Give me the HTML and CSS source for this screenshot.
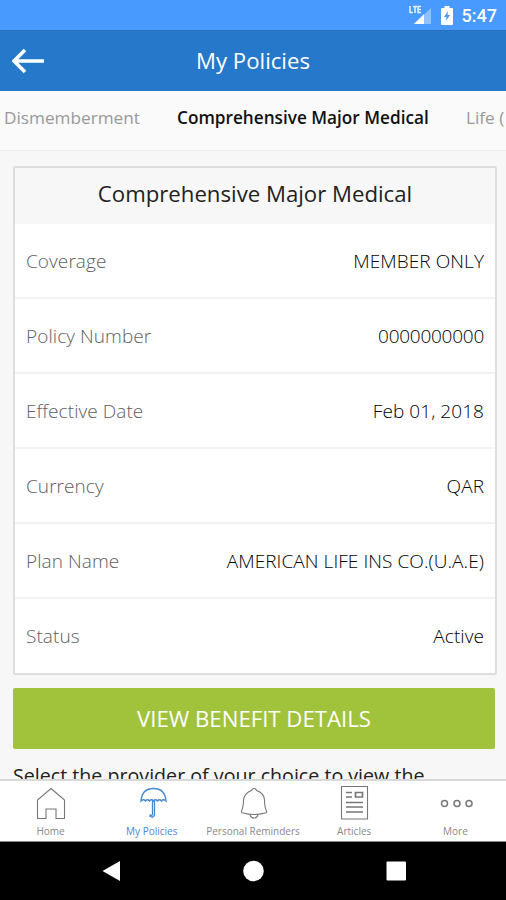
FILE: index.html
```html
<!DOCTYPE html>
<html lang="en">
<head>
<meta charset="utf-8">
<title>My Policies</title>
<link rel="stylesheet" href="styles.css">
</head>
<body>
<div class="status">
  <svg class="signal" width="24" height="20" viewBox="0 0 24 20"><path class="faint" d="M5 19L22 3V19Z"/><path class="white" d="M5 19L15 9V19Z"/><path class="lte" d="M1 1V7.500H4M4 1.500H8M6 1.500V8M12 1.500H9V7.500H12M9 4.500H12"/></svg>
  <svg class="battery" width="12" height="19" viewBox="0 0 12 19"><path class="white" d="M3.500 0H8.500V2H11Q12 2 12 3V18Q12 19 11 19H1Q0 19 0 18V3Q0 2 1 2H3.500Z"/><path class="bolt" d="M7 5L3 11H5.500L5 15L9 9H6.500Z"/></svg>
  <span class="clock">5:47</span>
</div>
<header class="bar">
  <svg class="back" width="33" height="26" viewBox="0 0 33 26"><path d="M13 2L2 13L13 24M2 13H32"/></svg>
  <h1>My Policies</h1>
</header>
<nav class="tabs"><span class="prev">Dismemberment</span><span class="current">Comprehensive Major Medical</span><span class="next">Life (</span></nav>
<main>
  <section class="card">
    <h2>Comprehensive Major Medical</h2>
    <dl>
      <div class="row"><dt>Coverage</dt><dd>MEMBER ONLY</dd></div>
      <div class="row"><dt>Policy Number</dt><dd class="digits">0000000000</dd></div>
      <div class="row"><dt>Effective Date</dt><dd>Feb 01, 2018</dd></div>
      <div class="row"><dt>Currency</dt><dd>QAR</dd></div>
      <div class="row"><dt>Plan Name</dt><dd>AMERICAN LIFE INS CO.(U.A.E)</dd></div>
      <div class="row"><dt>Status</dt><dd>Active</dd></div>
    </dl>
  </section>
  <button class="cta" type="button">VIEW BENEFIT DETAILS</button>
  <p class="hint">Select the provider of your choice to view the</p>
</main>
<nav class="bottom">
  <a><svg width="36" height="36" viewBox="0 0 36 36"><path d="M18 3.500L31.500 15V33.500H23V24H13V33.500H4.500V15Z"/></svg><span>Home</span></a>
  <a class="active"><svg width="36" height="36" viewBox="0 0 36 36"><path d="M7 16Q8 3.500 19.500 3.500T32 16Q29.500 13.500 27.500 16Q25.500 13.500 23.500 16Q21.500 13.500 19.500 16Q17.500 13.500 15.500 16Q13.500 13.500 11.500 16Q9.500 13.500 7 16ZM18.500 16V29.500Q17.500 31.500 15.500 29.500M20.500 16V30Q19 33.500 15.500 31"/></svg><span>My Policies</span></a>
  <a><svg width="36" height="36" viewBox="0 0 36 36"><path d="M16.500 5.500Q17 3.500 19 3.500T21.500 5.500Q29 8 29.500 15Q29.500 22 31.500 26Q32 28 30 28Q19 31 8 28Q6 28 6.500 26Q8.500 22 8.500 15Q9.500 8 16.500 5.500ZM15 30Q16 33 19 33T23 30"/></svg><span>Personal Reminders</span></a>
  <a><svg width="36" height="36" viewBox="0 0 36 36"><path d="M5.500 1.500H31.500V34H5.500Z"/><path class="thick" d="M10 7.500H16M10 12H16M19.500 7.500H26.500V12H19.500ZM10 17.500H27M10 22H27M10 27H27"/></svg><span>Articles</span></a>
  <a><svg class="dots" width="36" height="36" viewBox="0 0 36 36"><circle cx="7.500" cy="18.500" r="3"/><circle cx="20" cy="18.500" r="3"/><circle cx="32" cy="18.500" r="3"/></svg><span>More</span></a>
</nav>
<footer class="system">
  <svg width="506" height="58" viewBox="0 0 506 58"><path class="white" d="M102.500 29L120 19V39Z"/><circle class="white" cx="253.500" cy="29" r="10.300"/><rect class="white" x="386.500" y="19.500" width="19.500" height="19" rx="1"/></svg>
</footer>
</body>
</html>
```
FILE: styles.css
```css
* { box-sizing: border-box; margin: 0; padding: 0; }
body { width: 506px; height: 900px; overflow: hidden; display: flex; flex-direction: column; background: #f7f7f7; font-family: "Open Sans", "Noto Sans", sans-serif; color: #222; }
svg { display: block; fill: none; flex: none; }
.white { fill: #fff; stroke: none; }
.status { height: 30px; flex: none; background: #499afe; display: flex; align-items: center; justify-content: flex-end; padding-right: 9px; color: #fff; }
.signal { margin-right: 8px; }
.faint { fill: #8fc1ff; }
.lte { stroke: #e8f2ff; stroke-width: 1.500; }
.battery { margin-right: 9px; }
.bolt { fill: #499afe; }
.clock { font: 500 18px/32px Roboto, sans-serif; margin-top: 2px; }
.bar { height: 61px; flex: none; background: #2678ca; border-top: 1px solid #2a70bc; display: grid; grid-template-columns: 60px 1fr 60px; align-items: center; color: #fff; }
.back { margin-left: 12px; stroke: #fff; stroke-width: 3.600; }
h1 { font-size: 22.200px; font-weight: 400; text-align: center; white-space: nowrap; padding-bottom: 1px; }
.tabs { height: 60px; flex: none; background: #fafafa; border-bottom: 1px solid #eee; display: flex; padding-left: 4px; line-height: 53px; font-size: 17.200px; white-space: nowrap; color: #999; overflow: hidden; }
.prev { width: 173px; }
.current { width: 289px; color: #111; font-weight: 600; }
main { height: 628px; flex: none; overflow: hidden; padding: 15px 9px 0 13px; }
.card { height: 509px; background: #fff; border: 2px solid #dedede; border-radius: 2px; }
h2 { height: 56px; background: #f7f7f7; font-size: 22.200px; line-height: 51px; font-weight: 400; text-align: center; white-space: nowrap; }
.row { height: 75.100px; border-bottom: 2px solid #f2f2f2; display: flex; justify-content: space-between; align-items: center; padding: 0 11px; font-size: 19px; font-weight: 300; letter-spacing: 0.070px; }
.row:last-child { border-bottom: 0; height: 73px; }
dt { color: #606060; }
dd { color: #000; }
.digits { letter-spacing: -0.250px; }
.cta { display: block; width: 482px; height: 61px; margin-top: 13px; border: 0; border-radius: 2px; background: #a1c33c; color: #fff; font: 400 22.200px/60px "Open Sans", sans-serif; }
.hint { font-size: 19.650px; line-height: 26px; margin-top: 14px; white-space: nowrap; }
.bottom { height: 63px; flex: none; background: #fff; border-top: 2px solid #d8d8d8; border-bottom: 1px solid #888; display: grid; grid-template-columns: repeat(5, 1fr); font-size: 10px; color: #888; }
.bottom a { display: flex; flex-direction: column; align-items: center; padding-top: 4px; white-space: nowrap; }
.bottom svg { stroke: #777; stroke-width: 1.100; }
.bottom .thick { stroke-width: 1.700; }
.bottom .dots { stroke-width: 1.500; }
.bottom span { line-height: 14px; margin-top: 3px; }
.bottom .active { color: #4788d3; }
.bottom .active svg { stroke: #4788d3; stroke-width: 1.300; }
.system { height: 58px; flex: none; background: #000; }
```
